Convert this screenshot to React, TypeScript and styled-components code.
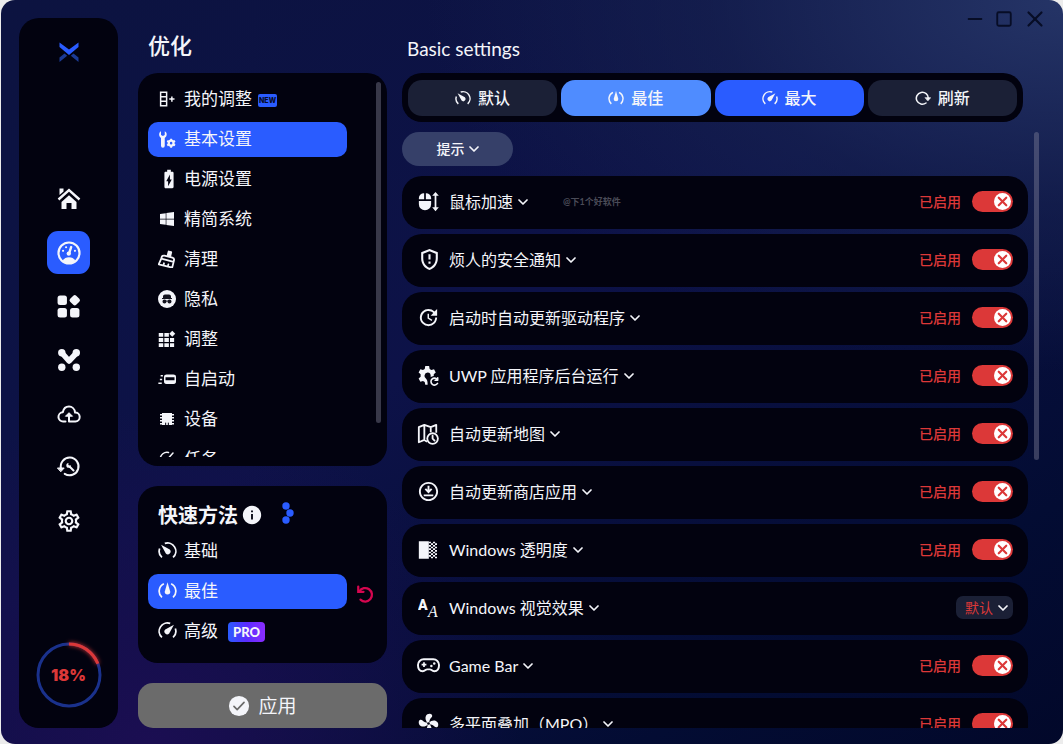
import React, { useState } from "react";
import styled, { createGlobalStyle, css } from "styled-components";
import { Minus, Square, X } from "lucide-react";
import { FaWindows } from "react-icons/fa";
import {
  MdBatteryChargingFull,
  MdInfo,
  MdOutlineDownloadForOffline,
  MdOutlineGppMaybe,
  MdOutlineSettings,
  MdUpdate,
} from "react-icons/md";
import { RiSpyFill } from "react-icons/ri";

const color = {
  accent: "#2a5cff",
  accentLight: "#4f8cff",
  panel: "#02020f",
  chip: "#1b2036",
  danger: "#dc3838",
  text: "#f4f5fa",
};

const GlobalStyle = createGlobalStyle`
  * { box-sizing: border-box; }
  body {
    margin: 0;
    background: #ececec;
    color: ${color.text};
    font-family: Lato, "Noto Sans CJK SC", sans-serif;
    font-size: 16px;
  }
  button, select, input { font: inherit; color: inherit; }
  button { border: 0; padding: 0; background: none; cursor: pointer; }
  h1, h2, ul, p { margin: 0; padding: 0; }
  ul { list-style: none; }
  svg { display: block; flex: none; }
`;

/* ---------- icons ---------- */

type IconProps = { size?: number };

const Svg = ({ size = 24, children }: IconProps & { children: React.ReactNode }) => (
  <svg
    width={size}
    height={size}
    viewBox="0 0 24 24"
    fill="none"
    stroke="currentColor"
    strokeWidth="2"
    strokeLinecap="round"
    strokeLinejoin="round"
    aria-hidden="true"
  >
    {children}
  </svg>
);

const solid = { fill: "currentColor", stroke: "none" };

const Logo = () => (
  <svg width="20" height="20" viewBox="0 0 20 20" aria-hidden="true">
    <path d="M0.5 0.5 10 7.5l9.5-7V5L10 13 0.5 5z" fill="#2a5cff" />
    <path d="M0.5 20v-4.500l5-4 2.700 2.300zM19.500 20v-4.500l-5-4-2.700 2.300z" fill="#1b3a94" />
  </svg>
);

const HomeIcon = () => (
  <Svg size={24}>
    <path d="M1.500 12.500 12 3l10.500 9.500" strokeWidth="2.400" strokeLinecap="butt" strokeLinejoin="miter" />
    <path d="M12 8.200 4.500 15v7h5v-6h5v6h5v-7z" {...solid} />
    <path d="M2.500 1.500h4v3l-4 3.500z" {...solid} />
  </Svg>
);

const DashboardIcon = () => (
  <Svg size={26}>
    <circle cx="12" cy="12" r="9.700" strokeWidth="2" />
    <path d="M6 19.500c1.500-2.700 3.500-3.500 6-3.500s4.500.800 6 3.500c-3 2.500-9 2.500-12 0z" {...solid} />
    <path d="M12 12.500 14 6.500" strokeWidth="2.200" />
    <circle cx="11.800" cy="12.500" r="2" {...solid} />
    <g {...solid}>
      <circle cx="6.500" cy="10" r="1" />
      <circle cx="9.300" cy="6.700" r="1" />
      <circle cx="17.500" cy="10" r="1" />
    </g>
  </Svg>
);

const AppsIcon = () => (
  <Svg size={25}>
    <g {...solid}>
      <rect x="1.500" y="1.500" width="9" height="9" rx="2.400" />
      <rect x="1.500" y="13.500" width="9" height="9" rx="2.400" />
      <rect x="13.500" y="13.500" width="9" height="9" rx="2.400" />
      <rect x="13.900" y="1.900" width="8.200" height="8.200" rx="2" transform="rotate(45 18 6)" />
    </g>
  </Svg>
);

const NodesIcon = () => (
  <Svg size={24}>
    <path d="M5 5 12 13 19.500 5" strokeWidth="5.500" />
    <g {...solid}>
      <circle cx="4.800" cy="4.800" r="3.700" />
      <circle cx="19.300" cy="4.800" r="3.700" />
      <circle cx="4.800" cy="19.300" r="3.700" />
      <circle cx="19.300" cy="19.300" r="3.700" />
    </g>
  </Svg>
);

const CloudIcon = () => (
  <Svg size={24}>
    <path d="M8.500 19.500H6.300a4.600 4.600 0 0 1-.5-9.200C6.600 6.500 9 4.600 12 4.600s5.700 2.200 6.100 6a4.300 4.300 0 0 1 .300 8.900H12v-7" />
    <path d="M8.700 14 12 10.700l3.300 3.300z" fill="currentColor" strokeWidth="1" />
  </Svg>
);

const HistoryIcon = () => (
  <Svg size={24}>
    <path d="M4 13.500a8.900 8.900 0 1 1 3.700 5.300" />
    <path d="M.800 13h6.400L4 16.500z" fill="currentColor" strokeWidth="1" />
    <path d="M12.500 11.500 16.500 15.500" strokeWidth="2" />
    <path d="M9.300 10.500c0-1.300.700-2.200 2.200-2.500l-.2 1.700 1 1 1.700-.400c0 1.700-1.200 2.500-2.500 2.500s-2.200-.900-2.200-2.300z" {...solid} />
  </Svg>
);

const ColumnAddIcon = ({ size }: IconProps) => (
  <Svg size={size}>
    <path d="M3.500 3h8v18h-8zM3.500 9h8M3.500 15h8M15 12h7M18.500 8.500v7" strokeLinejoin="miter" strokeLinecap="butt" />
  </Svg>
);

const ToolsIcon = ({ size }: IconProps) => (
  <Svg size={size}>
    <path d="M4 1.500v5l2.500 1.500L9 6.500v-5c2 1 3 3 2.500 5.300-.300 1.700-1.200 3-2.500 3.700V21a2.500 2.500 0 0 1-5 0V10.500C2.500 9.700 1.500 8 1.500 6 1.500 4 2.500 2.300 4 1.500z" {...solid} />
    <circle cx="17.500" cy="17.500" r="3.200" strokeWidth="3" />
    <path d="M17.500 11.500v3M17.500 20.500v3M12.300 14.500l2.600 1.500M20.100 19l2.600 1.500M12.300 20.500l2.600-1.500M20.100 16l2.600-1.500" strokeWidth="2.600" strokeLinecap="butt" />
  </Svg>
);

const BroomIcon = ({ size }: IconProps) => (
  <Svg size={size}>
    <g transform="rotate(14 12 12)" strokeWidth="2.400">
      <path d="M12 .500h3A1.500 1.500 0 0 1 16.500 2v6h-6V2A1.500 1.500 0 0 1 12 .500z" {...solid} />
      <path d="M4.500 13.500v-2a3 3 0 0 1 3-3h11a3 3 0 0 1 3 3v2zM4.500 13.500 3 21.500h18.500v-8M9.500 21.500v-3M15.500 21.500v-3" />
    </g>
  </Svg>
);

const IncognitoBadge = styled.span`
  display: grid;
  place-items: center;
  width: 18px;
  height: 18px;
  border-radius: 50%;
  background: ${color.text};
  color: #14141f;
`;

const TilesIcon = ({ size }: IconProps) => (
  <Svg size={size}>
    <g {...solid}>
      <path d="M1 4h6v5H1zM8.500 4h6v5h-6zM1 10.500h6v5.500H1zM8.500 10.500h6v5.500h-6zM16 10.500h5.500v5.500H16zM1 17.500h6v5H1zM8.500 17.500h6v5h-6zM16 17.500h5.500v5H16z" />
      <path d="M19 1 23 5 19 9 15 5z" />
    </g>
  </Svg>
);

const StartupIcon = ({ size }: IconProps) => (
  <Svg size={size}>
    <rect x="9" y="7" width="14" height="10.500" rx="2.500" strokeWidth="2" />
    <path d="M9 13.500h14v4H9zM9 7h14v2.500H9z" {...solid} />
    <path d="M3.500 7.500h3M2.500 12.500h3M.500 17.500h4.500" strokeLinecap="butt" />
  </Svg>
);

const ChipIcon = ({ size }: IconProps) => (
  <Svg size={size}>
    <path d="M4.500 3h15v18h-15z" {...solid} />
    <path d="M1.500 5.500h21M1.500 10h21M1.500 14.500h21M1.500 19h21" strokeLinecap="butt" strokeWidth="2.200" />
    <path d="M10 21v-3.500M14 21v-3.500" stroke="#02020f" strokeWidth="1.500" strokeLinecap="butt" />
  </Svg>
);

const TaskIcon = ({ size }: IconProps) => (
  <Svg size={size}>
    <path d="M3 12a9 9 0 0 1 11-8.700M21 12a9 9 0 0 1-18 0M12 13l8-9" />
  </Svg>
);

/* Split dial; the needle and the opening in its rim share one angle. */
const Gauge = ({ size, angle }: IconProps & { angle: number }) => {
  const at = (deg: number) => {
    const r = ((deg - 90) * Math.PI) / 180;
    return `${(12 + 10.5 * Math.cos(r)).toFixed(2)} ${(13 + 10.5 * Math.sin(r)).toFixed(2)}`;
  };
  const arc = (from: number, to: number) =>
    `M${at(from)}A10.5 10.5 0 ${to - from > 180 ? 1 : 0} 1 ${at(to)}`;
  return (
    <Svg size={size}>
      <path d={arc(-138, angle - 26)} strokeLinecap="butt" strokeWidth="2.200" />
      <path d={arc(angle + 26, 138)} strokeLinecap="butt" strokeWidth="2.200" />
      <path
        d="M12 1.500 15.500 13.500a3.500 3.500 0 1 1-7 0z"
        transform={`rotate(${angle} 12 13)`}
        {...solid}
      />
    </Svg>
  );
};

const RefreshIcon = ({ size }: IconProps) => (
  <Svg size={size}>
    <path d="M16.500 19.500A9 9 0 1 1 20 12.500" strokeWidth="2.300" />
    <path d="M15.500 11.500h8L19.500 16z" fill="currentColor" strokeWidth="1" />
  </Svg>
);

const MouseIcon = ({ size }: IconProps) => (
  <Svg size={size}>
    <g {...solid}>
      <path d="M7 2.500v7H1V8a5.700 5.700 0 0 1 6-5.500zM9 2.500v7h6V8a5.700 5.700 0 0 0-6-5.500zM1 11.500h14V15a7 7 0 0 1-14 0z" />
      <path d="M20 1l3.800 4.500h-7.600zM20 23l3.800-4.500h-7.600z" />
    </g>
    <path d="M20 4v16" strokeLinecap="butt" />
  </Svg>
);

const GearSyncIcon = ({ size }: IconProps) => (
  <Svg size={size}>
    <path
      d="M11 22.500H8.300l-.600-3.200-2-1.100-3 1-2-3.700 2.300-2.200v-2.600L.700 8.500l2-3.700 3 1 2-1.200L8.300 1h4.400l.600 3.600 2 1.200 3-1 2 3.700L18 10.700v1.800c-1.500.200-2.300.700-3.500 1.500.300-3.700-1-5.300-3.500-5.300a3.800 3.800 0 0 0-1.500 7.200c1.500 1.500 1.500 4.500 1.500 6.600z"
      {...solid}
    />
    <path d="M22 16.500a4 4 0 1 0 .300 4.500M22.500 14.500v3h-3" strokeWidth="1.800" />
  </Svg>
);

const MapClockIcon = ({ size }: IconProps) => (
  <Svg size={size}>
    <path d="M11 20.500 8 18.500l-6 2.500V4.500L8 2l7 2.500L21 2v8.500M8 2v16.500M15 4.500V10" strokeLinecap="butt" />
    <circle cx="17" cy="17" r="5.800" />
    <path d="M17 13.800V17l2.200 2.200" />
  </Svg>
);

const TransparencyIcon = ({ size }: IconProps) => (
  <Svg size={size}>
    <path d="M1 1.500h12v21H1z" {...solid} />
    <path d="M14.300 2v20M19.300 2v20" strokeDasharray="2 2" strokeWidth="2.500" strokeLinecap="butt" />
    <path d="M16.800 4v18M21.600 4v18" strokeDasharray="2 2" strokeWidth="2.400" strokeLinecap="butt" />
  </Svg>
);

const FontsIcon = ({ size }: IconProps) => (
  <Svg size={size}>
    <g {...solid}>
      <text x="0" y="14" fontFamily="Roboto, sans-serif" fontWeight="900" fontSize="17">A</text>
      <text x="12" y="22.500" fontFamily="Liberation Serif, serif" fontStyle="italic" fontSize="19">A</text>
    </g>
  </Svg>
);

const GamepadIcon = ({ size }: IconProps) => (
  <Svg size={size}>
    <path d="M7 5.500h10a6 6 0 0 1 6 6c0 4-2 6.500-5 6.500-2.500 0-3-2-4.500-2h-3c-1.500 0-2 2-4.500 2-3 0-5-2.500-5-6.500a6 6 0 0 1 6-6z" />
    <path d="M7.300 8.500v5M4.800 11h5" strokeWidth="1.800" strokeLinecap="butt" />
    <circle cx="18" cy="9.800" r="1.300" {...solid} />
    <circle cx="15" cy="12.600" r="1.300" {...solid} />
  </Svg>
);

const FanIcon = ({ size }: IconProps) => (
  <Svg size={size}>
    <g {...solid}>
      {[0, 90, 180, 270].map((turn) => (
        <path
          key={turn}
          d="M11.500 12C8.500 9 8 6 9 3.500 10 1 12.500.500 14.500 1c2 .500 2.300 3 .800 4.200C13.300 6.800 13 9 13 12z"
          transform={`rotate(${turn} 12 12)`}
        />
      ))}
    </g>
    <circle cx="12" cy="12" r="1.500" fill="#02020f" stroke="none" />
  </Svg>
);

const UndoIcon = () => (
  <Svg size={18}>
    <path d="M4.500 8.500A9 9 0 1 1 6 19.500" strokeWidth="3" />
    <path d="M3 2v7h7" strokeWidth="3" strokeLinejoin="miter" />
  </Svg>
);

const CheckIcon = () => (
  <Svg size={22}>
    <circle cx="12" cy="12" r="11" {...solid} />
    <path d="M6.500 12.500l3.500 3.500 7.500-8" stroke="#6b6b6b" strokeWidth="1.800" />
  </Svg>
);

const DotsIcon = () => (
  <svg width="12" height="22" viewBox="0 0 12 22" fill="#2a5cff" aria-hidden="true">
    <circle cx="4" cy="4" r="3.700" />
    <circle cx="8" cy="11" r="3.700" />
    <circle cx="4" cy="18" r="3.700" />
  </svg>
);

const Chevron = () => (
  <svg width="10" height="6" viewBox="0 0 10 6" fill="none" stroke="currentColor" strokeWidth="1.700" aria-hidden="true">
    <path d="M1 1l4 4 4-4" strokeLinecap="round" strokeLinejoin="round" />
  </svg>
);

/* ---------- shell ---------- */

const Window = styled.div`
  display: flex;
  height: 100vh;
  margin-left: 1px;
  padding: 0 18px 16px;
  border-radius: 14px;
  overflow: hidden;
  background:
    radial-gradient(ellipse 60% 50% at 100% 0%, rgba(38, 54, 104, 0.95), rgba(24, 36, 82, 0.6) 55%, transparent),
    radial-gradient(ellipse 35% 45% at 14% 100%, #1b0e52, transparent),
    linear-gradient(150deg, #0c1340 0%, #0d1248 45%, #030c33 82%, #02082a 100%);
`;

const Sidebar = styled.nav`
  display: flex;
  flex-direction: column;
  align-items: center;
  justify-content: space-between;
  flex: none;
  width: 99px;
  margin-top: 18px;
  padding: 24px 0 20px;
  border-radius: 20px;
  background: ${color.panel};
`;

const NavList = styled.ul`
  display: flex;
  flex-direction: column;
  justify-content: space-between;
  height: 365px;
  margin-top: 16px;
`;

const NavButton = styled.button<{ $active?: boolean }>`
  display: grid;
  place-items: center;
  width: 43px;
  height: 43px;
  border-radius: 11px;
  background: ${(p) => (p.$active ? color.accent : "transparent")};
`;

const Meter = styled.div`
  display: grid;
  place-items: center;
  > * { grid-area: 1 / 1; }
`;

const MeterValue = styled.span`
  color: ${color.danger};
  font: 900 16px/24px Inter, sans-serif;
`;

const MiddleColumn = styled.section`
  display: flex;
  flex-direction: column;
  gap: 20px;
  flex: none;
  width: 249px;
  margin-left: 20px;
  padding-top: 32px;
`;

const Title = styled.h1`
  margin-bottom: -7px;
  padding-left: 10px;
  font-size: 22px;
  line-height: 28px;
  font-weight: 500;
`;

const panel = css`
  border-radius: 20px;
  background: ${color.panel};
`;

const MenuPanel = styled.div`
  ${panel}
  display: flex;
  flex: 1;
  min-height: 0;
  padding: 9px 6px 9px 10px;
`;

const MenuList = styled.ul`
  display: flex;
  flex-direction: column;
  gap: 5px;
  flex: 1;
  padding-right: 29px;
  overflow: hidden;
`;

const MenuButton = styled.button<{ $active?: boolean }>`
  display: flex;
  align-items: center;
  gap: 8px;
  width: 199px;
  height: 35px;
  padding: 0 10px 2px;
  border-radius: 10px;
  background: ${(p) => (p.$active ? color.accent : "transparent")};
  font-size: 17px;
  line-height: 24px;
`;

const MenuIcon = styled.span`
  display: grid;
  place-items: center;
  width: 18px;
`;

const NewBadge = styled.span`
  margin: 3px 0 0 -2px;
  padding: 0 1px;
  border-radius: 2px;
  background: ${color.accent};
  color: #060a26;
  font: 800 7px/13px Inter, sans-serif;
`;

const ProBadge = styled.span`
  margin: 2px 0 0 2px;
  padding: 0 5px;
  border-radius: 4px;
  background: linear-gradient(90deg, #2a5cff, #5a2cff 50%, #8a2cff);
  font: 900 13px/20px Lato, sans-serif;
`;

const Thumb = styled.div<{ $share: number }>`
  flex: none;
  width: 5px;
  height: ${(p) => p.$share}%;
  border-radius: 3px;
  background: rgba(130, 132, 155, 0.42);
`;

const QuickPanel = styled.div`
  ${panel}
  padding: 14px 10px;
`;

const QuickHead = styled.div`
  display: flex;
  align-items: center;
  gap: 3px;
  height: 30px;
  margin-bottom: 4px;
  padding-left: 10px;
`;

const QuickTitle = styled.h2`
  font-size: 20px;
  line-height: 30px;
  font-weight: 700;
`;

const DotsButton = styled.button`
  margin: 0 0 5px 16px;
`;

const QuickList = styled.ul`
  display: flex;
  flex-direction: column;
  gap: 5px;
`;

const QuickItem = styled.li`
  display: flex;
  align-items: center;
  gap: 9px;
`;

const UndoButton = styled.button`
  padding-top: 4px;
  color: #d5064f;
`;

const ApplyButton = styled.button`
  display: flex;
  align-items: center;
  justify-content: center;
  gap: 8px;
  height: 45px;
  border-radius: 15px;
  background: #6b6b6b;
  font-size: 19px;
  line-height: 28px;
`;

const Main = styled.main`
  display: flex;
  flex-direction: column;
  flex: 1;
  min-width: 0;
  margin-left: 15px;
`;

const MainHeader = styled.header`
  display: flex;
  justify-content: space-between;
  align-items: flex-end;
  height: 73px;
  padding: 6px 0 10px 5px;
`;

const MainTitle = styled.h2`
  font-size: 19px;
  line-height: 28px;
  font-weight: 400;
`;

const WindowControls = styled.div`
  display: flex;
  align-items: center;
  align-self: flex-start;
  gap: 9px;
  margin-right: -3px;
  color: #070d26;
`;

const Toolbar = styled.div`
  display: grid;
  grid-template-columns: repeat(4, 1fr);
  gap: 4px;
  margin-right: 22px;
  padding: 7px 6px 6px;
  border-radius: 20px;
  background: ${color.panel};
`;

const ToolbarButton = styled.button<{ $tone?: "light" | "accent" }>`
  display: flex;
  align-items: center;
  justify-content: center;
  gap: 7px;
  height: 36px;
  border-radius: 14px;
  background: ${(p) =>
    p.$tone === "light" ? color.accentLight : p.$tone === "accent" ? color.accent : color.chip};
  font-weight: 500;
  line-height: 24px;
`;

const Scroller = styled.div`
  display: flex;
  flex: 1;
  min-height: 0;
  gap: 6px;
  margin-top: 10px;
  padding-right: 6px;
`;

const Content = styled.div`
  flex: 1;
  min-width: 0;
  overflow: hidden;
`;

const TipsButton = styled.button`
  display: flex;
  align-items: center;
  justify-content: center;
  gap: 4px;
  width: 111px;
  height: 34px;
  margin-bottom: 10px;
  border-radius: 17px;
  background: #364069;
  font-size: 14px;
  font-weight: 500;
  line-height: 20px;
`;

const Rows = styled.ul`
  display: flex;
  flex-direction: column;
  gap: 5px;
`;

const Row = styled.li`
  ${panel}
  display: flex;
  align-items: center;
  height: 53px;
  padding: 0 15px 2px;
`;

const RowButton = styled.button`
  display: flex;
  align-items: center;
  gap: 5px;
  line-height: 24px;
`;

const RowIcon = styled.span`
  display: grid;
  place-items: center;
  width: 22px;
  margin-right: 5px;
`;

const Note = styled.span`
  margin-left: 35px;
  color: #4a4b57;
  font-size: 9px;
  font-weight: 700;
  line-height: 14px;
`;

const SwitchLabel = styled.label`
  display: flex;
  align-items: center;
  gap: 11px;
  margin-left: auto;
  color: ${color.danger};
  font-size: 14px;
  font-weight: 500;
  line-height: 22px;
  cursor: pointer;
`;

const SwitchTrack = styled.span<{ $on: boolean }>`
  position: relative;
  display: flex;
  align-items: center;
  justify-content: ${(p) => (p.$on ? "flex-end" : "flex-start")};
  width: 41px;
  height: 21px;
  padding: 0 2px;
  border-radius: 11px;
  background: ${color.danger};
`;

const SwitchInput = styled.input`
  position: absolute;
  inset: 0;
  width: 100%;
  height: 100%;
  margin: 0;
  opacity: 0;
`;

const SwitchKnob = styled.span`
  display: grid;
  place-items: center;
  width: 17px;
  height: 17px;
  border-radius: 50%;
  background: #fff;
`;

const SelectBox = styled.div`
  display: grid;
  align-items: center;
  margin-left: auto;
  > * { grid-area: 1 / 1; }
  > svg { justify-self: end; margin-right: 5px; pointer-events: none; }
`;

const Select = styled.select`
  appearance: none;
  width: 57px;
  height: 23px;
  padding: 0 0 0 9px;
  border: 0;
  border-radius: 7px;
  background: ${color.chip};
  color: ${color.danger};
  font-size: 14px;
  line-height: 22px;
`;

/* ---------- parts ---------- */

const CpuMeter = () => {
  const length = 2 * Math.PI * 31;
  return (
    <Meter role="img" aria-label="18%">
      <svg width="66" height="66" viewBox="0 0 66 66" fill="none" overflow="visible">
        <circle cx="33" cy="33" r="31" stroke="#1a318c" strokeWidth="3" />
        <circle
          cx="33"
          cy="33"
          r="31"
          stroke="#dc3838"
          strokeWidth="3"
          strokeDasharray={`${length * 0.19} ${length}`}
          transform="rotate(-90 33 33)"
          filter="drop-shadow(0 0 2px #dc3838)"
        />
      </svg>
      <MeterValue>18%</MeterValue>
    </Meter>
  );
};

const Switch = ({ name }: { name: string }) => {
  const [on, setOn] = useState(true);
  return (
    <SwitchLabel>
      已启用
      <SwitchTrack $on={on}>
        <SwitchInput type="checkbox" checked={on} aria-label={name} onChange={() => setOn(!on)} />
        <SwitchKnob>
          <X size={15} strokeWidth={3.5} color={color.danger} />
        </SwitchKnob>
      </SwitchTrack>
    </SwitchLabel>
  );
};

const navItems = [
  { label: "主页", icon: <HomeIcon /> },
  { label: "优化", icon: <DashboardIcon />, active: true },
  { label: "应用", icon: <AppsIcon /> },
  { label: "网络", icon: <NodesIcon /> },
  { label: "更新", icon: <CloudIcon /> },
  { label: "还原", icon: <HistoryIcon /> },
  { label: "设置", icon: <MdOutlineSettings size={26} /> },
];

const menuItems = [
  { label: "我的调整", icon: <ColumnAddIcon size={18} />, isNew: true },
  { label: "基本设置", icon: <ToolsIcon size={18} />, active: true },
  { label: "电源设置", icon: <MdBatteryChargingFull size={22} /> },
  { label: "精简系统", icon: <FaWindows size={16} /> },
  { label: "清理", icon: <BroomIcon size={18} /> },
  { label: "隐私", icon: <IncognitoBadge><RiSpyFill size={12} /></IncognitoBadge> },
  { label: "调整", icon: <TilesIcon size={18} /> },
  { label: "自启动", icon: <StartupIcon size={18} /> },
  { label: "设备", icon: <ChipIcon size={16} /> },
  { label: "任务", icon: <TaskIcon size={18} /> },
];

const quickItems = [
  { label: "基础", angle: -45 },
  { label: "最佳", angle: 0, active: true },
  { label: "高级", angle: 45, pro: true },
];

const rows = [
  { label: "鼠标加速", icon: <MouseIcon size={21} />, note: "@下1个好软件" },
  { label: "烦人的安全通知", icon: <MdOutlineGppMaybe size={25} /> },
  { label: "启动时自动更新驱动程序", icon: <MdUpdate size={23} /> },
  { label: "UWP 应用程序后台运行", icon: <GearSyncIcon size={21} /> },
  { label: "自动更新地图", icon: <MapClockIcon size={22} /> },
  { label: "自动更新商店应用", icon: <MdOutlineDownloadForOffline size={23} /> },
  { label: "Windows 透明度", icon: <TransparencyIcon size={20} /> },
  { label: "Windows 视觉效果", icon: <FontsIcon size={20} />, select: true },
  { label: "Game Bar", icon: <GamepadIcon size={23} /> },
  { label: "多平面叠加（MPO）", icon: <FanIcon size={21} /> },
];

export default function App() {
  return (
    <>
      <GlobalStyle />
      <Window>
        <Sidebar>
          <Logo />
          <NavList>
            {navItems.map((item) => (
              <li key={item.label}>
                <NavButton $active={item.active} aria-label={item.label}>
                  {item.icon}
                </NavButton>
              </li>
            ))}
          </NavList>
          <CpuMeter />
        </Sidebar>

        <MiddleColumn>
          <Title>优化</Title>
          <MenuPanel>
            <MenuList>
              {menuItems.map((item) => (
                <li key={item.label}>
                  <MenuButton $active={item.active}>
                    <MenuIcon>{item.icon}</MenuIcon>
                    {item.label}
                    {item.isNew && <NewBadge>NEW</NewBadge>}
                  </MenuButton>
                </li>
              ))}
            </MenuList>
            <Thumb $share={91} />
          </MenuPanel>

          <QuickPanel>
            <QuickHead>
              <QuickTitle>快速方法</QuickTitle>
              <MdInfo size={22} />
              <DotsButton aria-label="更多"><DotsIcon /></DotsButton>
            </QuickHead>
            <QuickList>
              {quickItems.map((item) => (
                <QuickItem key={item.label}>
                  <MenuButton $active={item.active}>
                    <MenuIcon><Gauge size={19} angle={item.angle} /></MenuIcon>
                    {item.label}
                    {item.pro && <ProBadge>PRO</ProBadge>}
                  </MenuButton>
                  {item.active && <UndoButton aria-label="撤销"><UndoIcon /></UndoButton>}
                </QuickItem>
              ))}
            </QuickList>
          </QuickPanel>

          <ApplyButton><CheckIcon />应用</ApplyButton>
        </MiddleColumn>

        <Main>
          <MainHeader>
            <MainTitle>Basic settings</MainTitle>
            <WindowControls>
              <button aria-label="最小化"><Minus size={22} /></button>
              <button aria-label="最大化"><Square size={18} strokeWidth={2.5} /></button>
              <button aria-label="关闭"><X size={26} /></button>
            </WindowControls>
          </MainHeader>

          <Toolbar>
            <ToolbarButton><Gauge size={16} angle={-45} />默认</ToolbarButton>
            <ToolbarButton $tone="light"><Gauge size={16} angle={0} />最佳</ToolbarButton>
            <ToolbarButton $tone="accent"><Gauge size={16} angle={45} />最大</ToolbarButton>
            <ToolbarButton><RefreshIcon size={16} />刷新</ToolbarButton>
          </Toolbar>

          <Scroller>
            <Content>
              <TipsButton>提示<Chevron /></TipsButton>
              <Rows>
                {rows.map((row) => (
                  <Row key={row.label}>
                    <RowButton>
                      <RowIcon>{row.icon}</RowIcon>
                      {row.label}
                      <Chevron />
                    </RowButton>
                    {row.note && <Note>{row.note}</Note>}
                    {row.select ? (
                      <SelectBox>
                        <Select aria-label={row.label} defaultValue="默认">
                          <option>默认</option>
                        </Select>
                        <Chevron />
                      </SelectBox>
                    ) : (
                      <Switch name={row.label} />
                    )}
                  </Row>
                ))}
              </Rows>
            </Content>
            <Thumb $share={55} />
          </Scroller>
        </Main>
      </Window>
    </>
  );
}
